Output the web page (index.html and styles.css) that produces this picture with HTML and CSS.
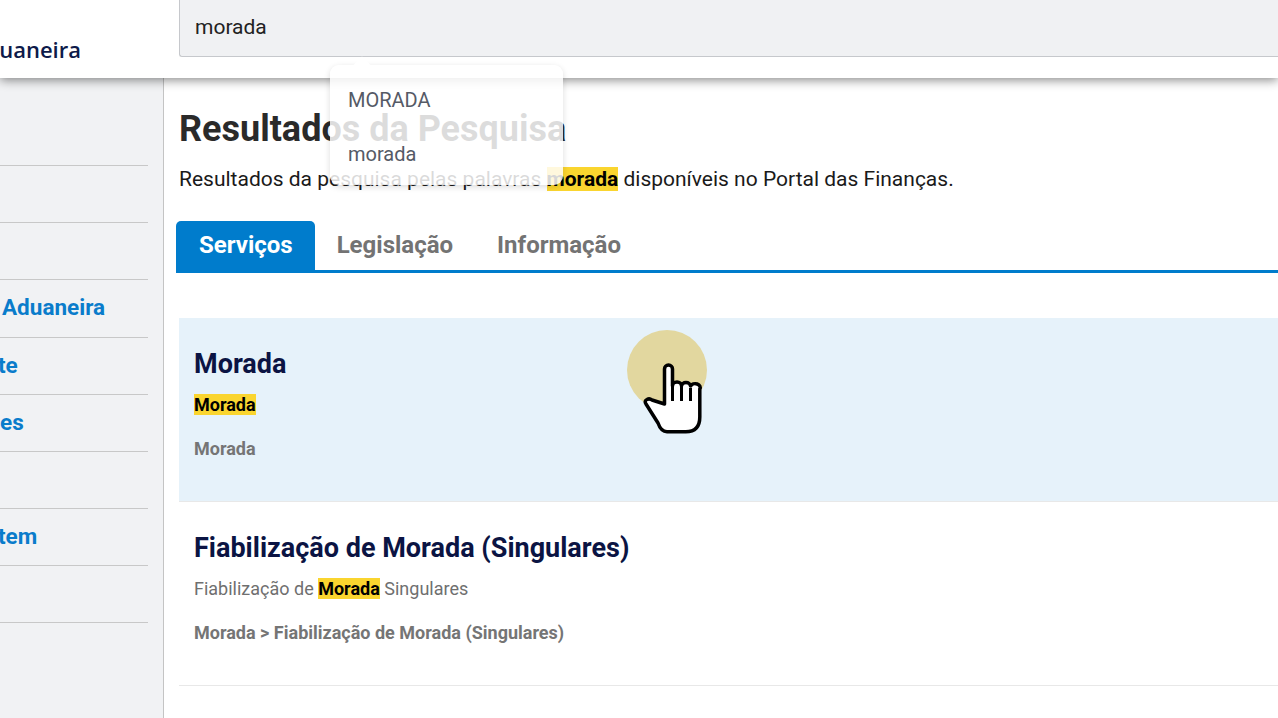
FILE: index.html
```html
<!DOCTYPE html>
<html>
<head>
    <title>Resultados da Pesquisa</title>
    <link rel="stylesheet" href="styles.css">
</head>
<body>
<header class="top-bar">
    <div class="logo-box"><span class="logo-text">Autoridade Tributária e Aduaneira</span></div>
    <div class="search-box">morada</div>
</header>
<div class="page">
    <nav class="side-menu">
        <div class="side-item"></div>
        <div class="side-item"></div>
        <div class="side-item"></div>
        <div class="side-item side-item-first-word">Aduaneira</div>
        <div class="side-item side-item-cut">te</div>
        <div class="side-item">es</div>
        <div class="side-item"></div>
        <div class="side-item side-item-cut">tem</div>
        <div class="side-item"></div>
    </nav>
    <main class="content">
        <h1 class="page-title">Resultados da Pesquisa</h1>
        <p class="page-intro">Resultados da pesquisa pelas palavras <mark class="hit">morada</mark> disponíveis no Portal das Finanças.</p>
        <div class="tabs">
            <div class="tab tab-active">Serviços</div>
            <div class="tab">Legislação</div>
            <div class="tab">Informação</div>
        </div>
        <div class="result result-hover">
            <div class="result-title">Morada</div>
            <div class="result-text"><mark class="hit">Morada</mark></div>
            <div class="result-path">Morada</div>
        </div>
        <div class="result">
            <div class="result-title">Fiabilização de Morada (Singulares)</div>
            <div class="result-text">Fiabilização de <mark class="hit">Morada</mark> Singulares</div>
            <div class="result-path">Morada &gt; Fiabilização de Morada (Singulares)</div>
        </div>
    </main>
</div>

<div class="suggest">
    <div class="suggest-item">MORADA</div>
    <div class="suggest-item">morada</div>
</div>

<div class="pointer-dot"></div>
<svg class="pointer-hand" width="70" height="80" viewBox="0 0 70 80">
    <path d="M24.500 44V9a4 4 0 0 1 8 0V26a4.500 4 0 0 1 9 0a4.500 3.500 0 0 1 9 0a4.700 3.500 0 0 1 9.300 3V57q0 14.700-14 14.700H27q-6 0-9-8.700L6 44q-2-3 1-4.500q2.500-1.500 5 .5z" fill="#fff" stroke="#000" stroke-width="3.500" stroke-linejoin="round"/>
    <path d="M32.500 26V41M41.500 26V41M50.500 28V41" fill="none" stroke="#000" stroke-width="3"/>
</svg>
</body>
</html>
```

FILE: styles.css
```css
* {
    box-sizing: border-box;
}
html, body {
    margin: 0;
    height: 100%;
    overflow: hidden;
}
body {
    font-family: Roboto, "Liberation Sans", sans-serif;
    background-color: #fff;
    color: #222;
}
.top-bar {
    position: relative;
    z-index: 2;
    display: flex;
    height: 78px;
    background-color: #fff;
    box-shadow: 0 2px 10px rgba(0,0,0,0.48);
}
.logo-box {
    flex: 0 0 179px;
    display: flex;
    justify-content: flex-end;
    overflow: hidden;
    white-space: nowrap;
    padding: 34px 98px 0 0;
}
.logo-text {
    font-family: "Open Sans", sans-serif;
    font-size: 22px;
    font-weight: 600;
    color: #0d1a4a;
}
.search-box {
    flex: 1;
    height: 57px;
    padding: 15px 15px;
    font-size: 21px;
    color: #222;
    background-color: #f0f1f3;
    border-left: 1px solid #c6c8cc;
    border-bottom: 1px solid #c6c8cc;
    border-bottom-left-radius: 3px;
}
.page {
    display: flex;
    height: 640px;
}
.side-menu {
    flex: 0 0 164px;
    padding: 31px 15px 0 0;
    background-color: #f1f2f4;
    border-right: 1px solid #c4c4c4;
}
.side-item {
    height: 57.125px;
    line-height: 54px;
    font-size: 22.500px;
    font-weight: 700;
    color: #0a7ccb;
    border-bottom: 1px solid #c8c8c8;
    white-space: nowrap;
}
.side-item-first-word {
    padding-left: 2px;
}
.side-item-cut {
    text-indent: -2px;
}
.content {
    flex: 1;
    padding: 28px 0 0 12px;
    min-width: 0;
}
.page-title {
    margin: 0 0 0 3px;
    font-size: 36px;
    line-height: 46px;
    font-weight: 700;
    color: #2a2a2a;
}
.page-intro {
    margin: 14px 0 0 3px;
    font-size: 21px;
    line-height: 26px;
    color: #1a1a1a;
}
.hit {
    background-color: #fad52f;
    color: #000;
    font-weight: 700;
}
.tabs {
    display: flex;
    margin-top: 29px;
    height: 52px;
    border-bottom: 3px solid #007ccc;
}
.tab {
    padding: 10px 22px 0;
    font-size: 24px;
    font-weight: 700;
    color: #737373;
}
.tab-active {
    height: 52px;
    padding: 10px 22px 0 23px;
    background-color: #007ccc;
    color: #fff;
    border-radius: 5px 5px 0 0;
}
.result {
    margin: 0 0 0 3px;
    height: 184px;
    padding: 30px 15px 0;
    border-bottom: 1px solid #e8e8e8;
}
.result-hover {
    margin-top: 45px;
    background-color: #e6f2fa;
}
.result-title {
    font-size: 27px;
    line-height: 32px;
    font-weight: 700;
    color: #0b1443;
}
.result-text {
    margin-top: 13px;
    font-size: 18px;
    line-height: 24px;
    color: #6f6f6f;
}
.result-path {
    margin-top: 20px;
    font-size: 18px;
    line-height: 24px;
    font-weight: 700;
    color: #757575;
}
.suggest {
    position: absolute;
    z-index: 3;
    left: 330px;
    top: 65px;
    width: 233px;
    height: 120px;
    padding-top: 23px;
    background-color: rgba(255,255,255,0.84);
    border-radius: 9px;
    box-shadow: 0 2px 6px rgba(0,0,0,0.14);
}
.suggest:before {
    content: '';
    position: absolute;
    left: 26px;
    top: -6px;
    width: 12px;
    height: 12px;
    background-color: #fff;
    transform: rotate(45deg);
}
.suggest-item {
    padding-left: 18px;
    height: 54px;
    font-size: 20px;
    line-height: 24px;
    color: #555a66;
}
.pointer-dot {
    position: absolute;
    left: 627px;
    top: 330px;
    width: 80px;
    height: 80px;
    border-radius: 50%;
    background-color: #e2d79f;
}
.pointer-hand {
    position: absolute;
    left: 640px;
    top: 360px;
}
```
